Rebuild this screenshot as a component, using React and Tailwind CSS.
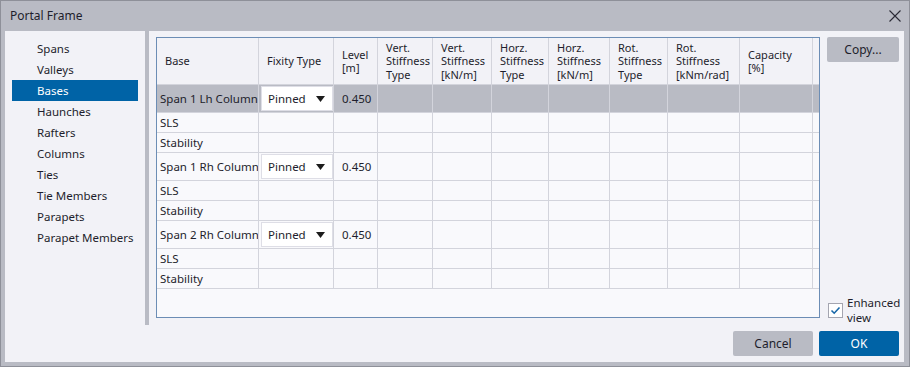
import React from 'react'

const navItems = ['Spans', 'Valleys', 'Bases', 'Haunches', 'Rafters', 'Columns', 'Ties', 'Tie Members', 'Parapets', 'Parapet Members']

const cols = [
  { w: 'w-[102px]', label: ['Base'] },
  { w: 'w-[75px]', label: ['Fixity Type'] },
  { w: 'w-[44px]', label: ['Level', '[m]'] },
  { w: 'w-[55px]', label: ['Vert.', 'Stiffness', 'Type'] },
  { w: 'w-[59px]', label: ['Vert.', 'Stiffness', '[kN/m]'] },
  { w: 'w-[57px]', label: ['Horz.', 'Stiffness', 'Type'] },
  { w: 'w-[61px]', label: ['Horz.', 'Stiffness', '[kN/m]'] },
  { w: 'w-[58px]', label: ['Rot.', 'Stiffness', 'Type'] },
  { w: 'w-[72px]', label: ['Rot.', 'Stiffness', '[kNm/rad]'] },
  { w: 'w-[73px]', label: ['Capacity', '[%]'] },
  { w: 'w-[30px]', label: [] },
]

const rows = [
  { name: 'Span 1 Lh Column', main: true, selected: true },
  { name: 'SLS' },
  { name: 'Stability' },
  { name: 'Span 1 Rh Column', main: true },
  { name: 'SLS' },
  { name: 'Stability' },
  { name: 'Span 2 Rh Column', main: true },
  { name: 'SLS' },
  { name: 'Stability' },
]

function Dropdown() {
  return (
    <div className='ml-[2px] shrink-0 h-[25px] w-[72px] bg-white border border-[#dedee6] flex items-center justify-between pl-[6px] pr-[7px]'>
      <span>Pinned</span>
      <svg width='9' height='6' viewBox='0 0 9 6'><path d='M0 0 H9 L4.5 6 Z' fill='#1c1c1c' /></svg>
    </div>
  )
}

function TableRow({ row }) {
  const h = row.main ? 'h-[28px]' : 'h-[20px]'
  const bg = row.selected ? 'bg-[#b9bbc4]' : 'bg-[#f9f9fc]'
  return (
    <div className={`flex ${h} ${bg}`}>
      {cols.map((c, i) => (
        <div key={i} className={`${c.w} shrink-0 border-r border-b border-[#d3d4dc] flex items-center overflow-hidden whitespace-nowrap ${i === 0 ? 'pl-[3px]' : i === 2 ? 'pl-[8px]' : ''}`}>
          {i === 0 && row.name}
          {i === 1 && row.main && <Dropdown />}
          {i === 2 && row.main && '0.450'}
        </div>
      ))}
    </div>
  )
}

export default function App() {
  return (
    <div className="w-[910px] h-[367px] flex flex-col bg-[#b9bbc4] border border-[#8e9099] text-[11.5px] text-[#1e1e2c] font-['Noto_Sans',sans-serif] overflow-hidden">
      <div className='h-[30px] shrink-0 flex items-center justify-between pl-[9px] pr-[8px]'>
        <span className='text-[12px]'>Portal Frame</span>
        <svg width='12' height='12' viewBox='0 0 12 12'>
          <path d='M0.5 0.5 L11.5 11.5 M11.5 0.5 L0.5 11.5' stroke='#2a2a35' strokeWidth='1.1' />
        </svg>
      </div>

      <div className='flex-1 ml-[4px] mr-[5px] mb-[4px] bg-[#f2f2f7] flex flex-col'>
        <div className='h-[294px] flex'>
          <div className='w-[140px] pt-[7px] px-[7px]'>
            {navItems.map((item) => (
              <div key={item} className={`h-[21px] flex items-center pl-[25px] ${item === 'Bases' ? 'bg-[#0063a6] text-white' : ''}`}>
                {item}
              </div>
            ))}
          </div>
          <div className='w-[4px] bg-[#b9bbc4]' />
          <div className='flex-1 flex pl-[7px] pt-[6px] pr-[5px]'>
            <div className='w-[664px] h-[281px] border border-[#6c8db5] bg-[#f9f9fc] overflow-hidden'>
              <div className='flex h-[47px] bg-[#f2f2f7]'>
                {cols.map((c, i) => (
                  <div key={i} className={`${c.w} shrink-0 border-r border-b border-[#d3d4dc] flex flex-col justify-center pl-[8px] text-[11px] leading-[13.5px] overflow-hidden whitespace-nowrap`}>
                    {c.label.map((l) => <span key={l}>{l}</span>)}
                  </div>
                ))}
              </div>
              {rows.map((row, i) => <TableRow key={i} row={row} />)}
            </div>
            <div className='ml-[7px] w-[72px] flex flex-col justify-between'>
              <button className='h-[25px] w-full bg-[#b9bbc4] rounded-[2px] text-[12px]'>Copy...</button>
              <div className='flex items-center gap-[4px] pl-[1px]'>
                <div className='w-[15px] h-[15px] shrink-0 bg-white border border-[#a4a5b0] flex items-center justify-center'>
                  <svg width='11' height='11' viewBox='0 0 11 11'>
                    <path d='M1.5 5.5 L4.2 8.2 L9.5 2.5' fill='none' stroke='#1767a8' strokeWidth='1.6' />
                  </svg>
                </div>
                <div className='leading-[15px]'>
                  <div>Enhanced</div>
                  <div>view</div>
                </div>
              </div>
            </div>
          </div>
        </div>
        <div className='flex justify-end gap-[6px] pt-[6px] pr-[5px] text-[12px]'>
          <button className='w-[80px] h-[25px] bg-[#b9bbc4] rounded-[2px]'>Cancel</button>
          <button className='w-[80px] h-[25px] bg-[#0063a6] text-white rounded-[2px]'>OK</button>
        </div>
      </div>
    </div>
  )
}
